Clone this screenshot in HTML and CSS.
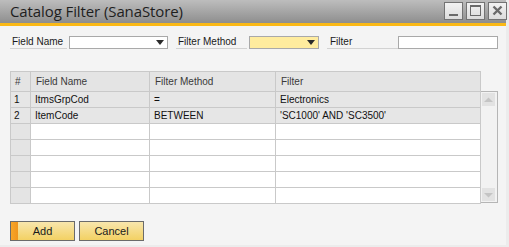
FILE: index.html
```html
<!DOCTYPE html>
<html>
<head>
<meta charset="utf-8">
<title>Catalog Filter (SanaStore)</title>
<link rel="stylesheet" href="styles.css">
</head>
<body>
<div class="window">
	<div class="titlebar">
		<span class="title">Catalog Filter (SanaStore)</span>
		<div class="win-btns">
			<span class="win-btn"><svg width="17" height="16" viewBox="0 0 17 16"><rect x="4" y="11" width="9" height="2" fill="#6a6a6a"/></svg></span>
			<span class="win-btn"><svg width="17" height="16" viewBox="0 0 17 16"><rect x="3.5" y="2.5" width="10" height="10" fill="none" stroke="#6a6a6a"/><rect x="3" y="2" width="11" height="2" fill="#6a6a6a"/></svg></span>
			<span class="win-btn"><svg width="17" height="16" viewBox="0 0 17 16"><path d="M4.5 3.5 L12.5 11.5 M12.5 3.5 L4.5 11.5" stroke="#6a6a6a" stroke-width="2.4"/></svg></span>
		</div>
	</div>

	<div class="filters">
		<label class="lbl lbl-field">Field Name</label>
		<div class="combo combo-field"><span class="arrow"></span></div>
		<label class="lbl lbl-method">Filter Method</label>
		<div class="combo combo-method"><span class="arrow"></span></div>
		<label class="lbl lbl-filter">Filter</label>
		<div class="edit"></div>
	</div>

	<div class="grid-wrap">
		<table class="grid">
			<colgroup>
				<col class="c-num"><col class="c-field"><col class="c-method"><col class="c-filter">
			</colgroup>
			<thead>
				<tr><th>#</th><th>Field Name</th><th>Filter Method</th><th>Filter</th></tr>
			</thead>
			<tbody>
				<tr class="filled"><td class="num">1</td><td>ItmsGrpCod</td><td>=</td><td>Electronics</td></tr>
				<tr class="filled"><td class="num">2</td><td>ItemCode</td><td>BETWEEN</td><td>'SC1000' AND 'SC3500'</td></tr>
				<tr><td class="num"></td><td></td><td></td><td></td></tr>
				<tr><td class="num"></td><td></td><td></td><td></td></tr>
				<tr><td class="num"></td><td></td><td></td><td></td></tr>
				<tr><td class="num"></td><td></td><td></td><td></td></tr>
				<tr><td class="num"></td><td></td><td></td><td></td></tr>
			</tbody>
		</table>
		<div class="scrollbar">
			<span class="sb-btn"><svg width="11" height="12" viewBox="0 0 11 12"><path d="M1 8 L5.5 3.5 L10 8 Z" fill="#c4c4c4"/></svg></span>
			<span class="sb-btn"><svg width="11" height="12" viewBox="0 0 11 12"><path d="M1 4 L5.5 8.5 L10 4 Z" fill="#c4c4c4"/></svg></span>
		</div>
	</div>

	<div class="buttons">
		<button class="btn btn-default">Add</button>
		<button class="btn">Cancel</button>
	</div>
</div>
</body>
</html>
```

FILE: styles.css
```css
* { margin: 0; padding: 0; box-sizing: border-box; }

body {
	background: #f4f4f4;
	font-family: "Liberation Sans", Arial, sans-serif;
	font-size: 10px;
	color: #1a1a1a;
}

.window {
	width: 509px;
	height: 247px;
	background: #f4f4f4;
	border-right: 3px solid #ececec;
	border-bottom: 2px solid #ececec;
}

.titlebar {
	height: 26px;
	display: flex;
	align-items: flex-start;
	justify-content: space-between;
	background: linear-gradient(#bdbdbd, #8e8e8e);
	border-bottom: 3px solid #fbb916;
}
.title {
	font-family: "Open Sans", sans-serif;
	font-size: 15px;
	line-height: 22px;
	padding-left: 10px;
	color: #1e1e1e;
	letter-spacing: -0.1px;
}
.win-btns {
	display: flex;
	gap: 3px;
	padding-top: 2px;
	margin-right: -1px;
}
.win-btn {
	width: 19px;
	height: 18px;
	border: 1px solid #737373;
	background: linear-gradient(#f2f2f2, #dcdcdc);
	display: flex;
}

.filters {
	display: flex;
	align-items: flex-end;
	padding: 10px 0 0 10px;
	height: 23px;
}
.lbl {
	height: 13px;
	line-height: 11px;
	padding-left: 2px;
	border-bottom: 1px solid #d2d2d2;
}
.lbl-field { width: 57px; margin-right: 2px; }
.lbl-method { width: 71px; margin: 0 2px 0 8px; }
.lbl-filter { width: 71px; margin-left: 8px; padding-left: 3px; }
.combo, .edit {
	height: 13px;
	border: 1px solid #a9a9a9;
	background: #fff;
	position: relative;
}
.combo-field { width: 99px; }
.combo-method { width: 70px; background: #ffec9e; }
.edit { width: 100px; }
.arrow {
	position: absolute;
	right: 3px;
	top: 3px;
	border-left: 4px solid transparent;
	border-right: 4px solid transparent;
	border-top: 5px solid #2b2b2b;
}

.grid-wrap {
	display: flex;
	align-items: flex-start;
	padding: 22px 0 0 10px;
}
.grid {
	width: 471px;
	border-collapse: collapse;
	table-layout: fixed;
}
.c-num { width: 20px; }
.c-field { width: 119px; }
.c-method { width: 126px; }
.grid th, .grid td {
	border: 1px solid #c9c9c9;
	text-align: left;
	font-weight: normal;
	white-space: nowrap;
	overflow: hidden;
	padding: 0 0 0 4px;
}
.grid th {
	height: 20px;
	background: #e4e4e4;
	color: #3a3a3a;
	padding-left: 5px;
}
.grid th:first-child { padding-left: 4px; }
.grid td {
	height: 16px;
	background: #fff;
	color: #111;
}
.grid td.num { background: #e4e4e4; padding-left: 3px; }
.grid tr.filled td { background: #e6e6e6; }

.scrollbar {
	width: 17px;
	height: 112px;
	margin-top: 20px;
	border: 1px solid #b5b5b5;
	border-left: none;
	background: #f2f2f2;
	display: flex;
	flex-direction: column;
	justify-content: space-between;
	padding: 1px 2px 1px 1px;
}
.sb-btn {
	width: 13px;
	height: 13px;
	background: #e2e2e2;
	display: flex;
	align-items: center;
	justify-content: center;
}

.buttons {
	display: flex;
	gap: 4px;
	padding: 17px 0 0 10px;
}
.btn {
	width: 65px;
	height: 20px;
	border: 1px solid #6b6b6b;
	background: linear-gradient(#f8e6ad, #f3d163);
	font-family: "Liberation Sans", Arial, sans-serif;
	font-size: 11px;
	color: #1a1a1a;
}
.btn-default {
	background: linear-gradient(90deg, #f7a628 0, #f0951c 7px, transparent 7px), linear-gradient(#f8e6ad, #f3d163);
}
```
